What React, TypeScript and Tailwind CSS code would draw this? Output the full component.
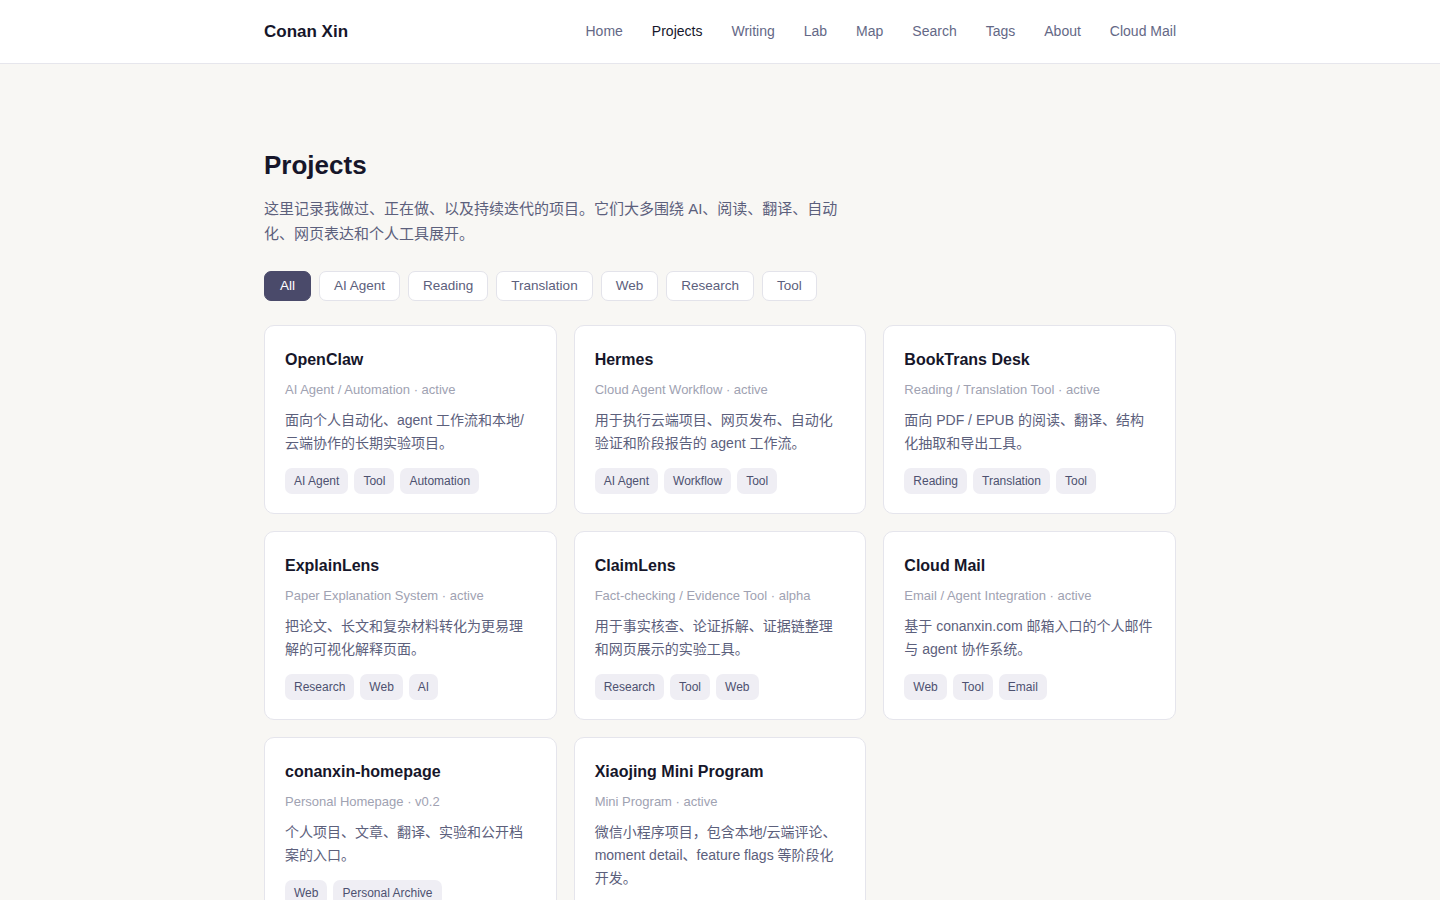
import React from "react";

const nav = ["Home", "Projects", "Writing", "Lab", "Map", "Search", "Tags", "About", "Cloud Mail"];
const filters = ["All", "AI Agent", "Reading", "Translation", "Web", "Research", "Tool"];

const projects = [
  { title: "OpenClaw", meta: "AI Agent / Automation · active", desc: "面向个人自动化、agent 工作流和本地/云端协作的长期实验项目。", tags: ["AI Agent", "Tool", "Automation"] },
  { title: "Hermes", meta: "Cloud Agent Workflow · active", desc: "用于执行云端项目、网页发布、自动化验证和阶段报告的 agent 工作流。", tags: ["AI Agent", "Workflow", "Tool"] },
  { title: "BookTrans Desk", meta: "Reading / Translation Tool · active", desc: "面向 PDF / EPUB 的阅读、翻译、结构化抽取和导出工具。", tags: ["Reading", "Translation", "Tool"] },
  { title: "ExplainLens", meta: "Paper Explanation System · active", desc: "把论文、长文和复杂材料转化为更易理解的可视化解释页面。", tags: ["Research", "Web", "AI"] },
  { title: "ClaimLens", meta: "Fact-checking / Evidence Tool · alpha", desc: "用于事实核查、论证拆解、证据链整理和网页展示的实验工具。", tags: ["Research", "Tool", "Web"] },
  { title: "Cloud Mail", meta: "Email / Agent Integration · active", desc: "基于 conanxin.com 邮箱入口的个人邮件与 agent 协作系统。", tags: ["Web", "Tool", "Email"] },
  { title: "conanxin-homepage", meta: "Personal Homepage · v0.2", desc: "个人项目、文章、翻译、实验和公开档案的入口。", tags: ["Web", "Personal Archive"] },
  { title: "Xiaojing Mini Program", meta: "Mini Program · active", desc: "微信小程序项目，包含本地/云端评论、moment detail、feature flags 等阶段化开发。", tags: [] as string[] },
];

export default function App() {
  return (
    <div
      className="min-h-screen bg-[#f8f7f4] text-[#1b1b2e]"
      style={{ fontFamily: '"Liberation Sans", Arial, "Noto Sans CJK SC", sans-serif' }}
    >
      <header className="h-[64px] bg-white border-b border-[#e6e6ec]">
        <div className="mx-auto w-[912px] h-[63px] flex items-center justify-between">
          <div className="text-[17px] font-bold text-[#16162a]">Conan Xin</div>
          <nav className="flex items-center gap-[29px] text-[14px]">
            {nav.map((n) => (
              <span key={n} className={n === "Projects" ? "text-[#16162a]" : "text-[#646886]"}>
                {n}
              </span>
            ))}
          </nav>
        </div>
      </header>

      <main className="mx-auto w-[912px] pt-[86px]">
        <h1 className="text-[26px] font-bold leading-[30px] text-[#16162a]">Projects</h1>
        <p className="mt-[16px] w-[580px] text-[15px] leading-[25px] text-[#5c607c]">
          这里记录我做过、正在做、以及持续迭代的项目。它们大多围绕 AI、阅读、翻译、自动化、网页表达和个人工具展开。
        </p>
        <div className="mt-[25px] flex gap-[8px]">
          {filters.map((f) => (
            <span
              key={f}
              className={
                f === "All"
                  ? "h-[30px] px-[15px] flex items-center rounded-[7px] border border-[#4a4a6a] bg-[#4a4a6a] text-white text-[13.5px]"
                  : "h-[30px] px-[14px] flex items-center rounded-[7px] border border-[#e3e3ea] bg-white text-[#5c607c] text-[13.5px]"
              }
            >
              {f}
            </span>
          ))}
        </div>

        <div className="mt-[24px] grid grid-cols-3 gap-[17px]">
          {projects.map((p) => (
            <div key={p.title} className="rounded-[10px] border border-[#e5e5ec] bg-white px-[20px] pt-[23px] pb-[19px]">
              <div className="text-[16px] font-bold leading-[22px] text-[#16162a]">{p.title}</div>
              <div className="mt-[10px] text-[13px] leading-[18px] text-[#a0a2b2]">{p.meta}</div>
              <div className="mt-[10px] text-[14px] leading-[23px] text-[#5c607c]">{p.desc}</div>
              {p.tags.length > 0 && (
                <div className="mt-[13px] flex gap-[6px]">
                  {p.tags.map((t) => (
                    <span key={t} className="h-[26px] px-[9px] flex items-center rounded-[7px] bg-[#efeef4] text-[12px] text-[#4d5170]">
                      {t}
                    </span>
                  ))}
                </div>
              )}
            </div>
          ))}
        </div>
      </main>
    </div>
  );
}
